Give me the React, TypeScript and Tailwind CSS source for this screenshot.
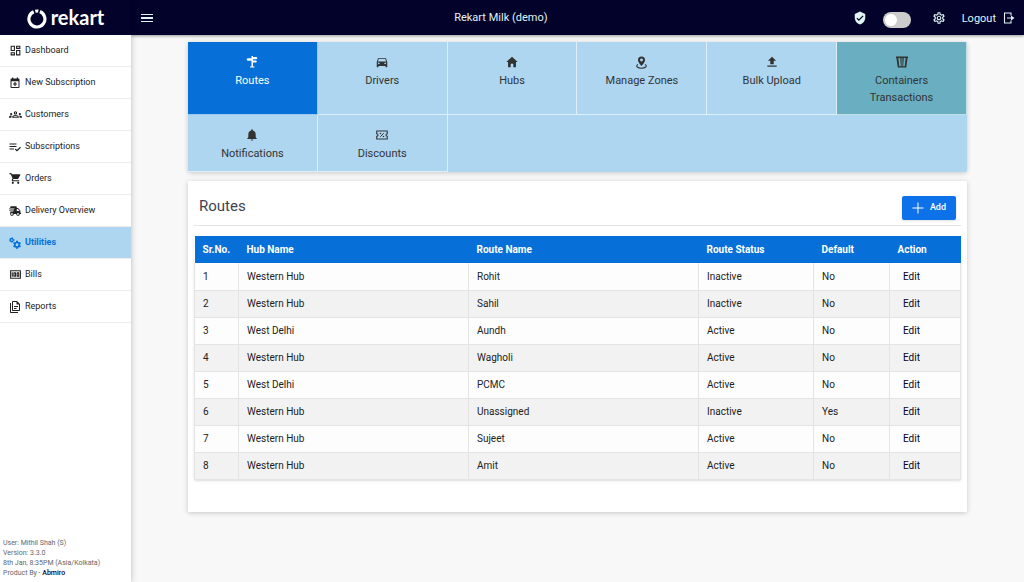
import type { ReactNode } from 'react';
import {
  MdOutlineDashboard, MdOutlineGroups, MdShoppingCart, MdMoney,
  MdVerifiedUser, MdOutlineSettings, MdDirectionsCar,
} from 'react-icons/md';
import { FaShippingFast } from 'react-icons/fa';
import { IoMdHome, IoMdNotifications } from 'react-icons/io';

interface IconProps {
  className?: string;
}

interface NavItem {
  label: string;
  icon: ReactNode;
  active?: boolean;
}

interface Tile {
  label: string;
  icon: ReactNode;
  style: string;
}

interface Route {
  hub: string;
  name: string;
  status: string;
  isDefault: string;
}

function Svg({ children, className = 'size-3' }: IconProps & { children: ReactNode }) {
  return (
    <svg viewBox="0 0 24 24" fill="currentColor" className={className} aria-hidden="true">
      {children}
    </svg>
  );
}

function CalendarIcon() {
  return (
    <Svg>
      <path d="M19 3h-1V1h-2.500v2h-7V1H6v2H5a2 2 0 0 0-2 2v15a2 2 0 0 0 2 2h14a2 2 0 0 0 2-2V5a2 2 0 0 0-2-2zm0 17H5V8.500h14V20z" />
      <path d="M12 10v8M8 14h8" stroke="currentColor" strokeWidth="2.4" />
    </Svg>
  );
}

function ListCheckIcon() {
  return (
    <Svg>
      <path d="M1 6h14M1 11h14M1 16h9M12.500 16l3.500 3.500 7-7" fill="none" stroke="currentColor" strokeWidth="2.4" />
    </Svg>
  );
}

function CogsIcon() {
  return (
    <Svg>
      <circle cx="5.500" cy="6" r="3" fill="none" stroke="currentColor" strokeWidth="2.6" />
      <circle cx="5.500" cy="6" r="4.600" fill="none" stroke="currentColor" strokeWidth="1.600" strokeDasharray="2.400 2.400" />
      <circle cx="16" cy="15.500" r="4.500" fill="none" stroke="currentColor" strokeWidth="3.400" />
      <path d="M16 7.500v3M16 20.500v3M9 11.500l3 1.700M20 17.800l3 1.700M9 19.500l3-1.700M20 13.200l3-1.700" stroke="currentColor" strokeWidth="4" />
    </Svg>
  );
}

function ReportsIcon() {
  return (
    <Svg>
      <path d="M16 0H8C6.900 0 6 .9 6 2v16c0 1.100.9 2 2 2h12c1.100 0 2-.9 2-2V6l-6-6zm4 18H8V2h7v5h5v11zM2 4v18c0 1.100.9 2 2 2h14v-2H4V4zm8 6v2h8v-2h-8zm0 4v2h5v-2h-5z" />
    </Svg>
  );
}

function SignIcon() {
  return (
    <Svg>
      <path d="M11 0h3v2h7l2 2.200-2 2.200h-7V9h6l2 2-2 2h-6v8h3v2H8v-2h3V9.500H3L1 7l2-2.500h8z" />
    </Svg>
  );
}

function ZoneIcon() {
  return (
    <Svg className="size-[13px]">
      <path d="M12 1a6.500 6.500 0 0 0-6.500 6.500C5.500 12.200 12 18.500 12 18.500s6.500-6.300 6.500-11A6.500 6.500 0 0 0 12 1zm0 9.200a2.700 2.700 0 1 1 0-5.400 2.700 2.700 0 0 1 0 5.400z" />
      <path d="M5.500 15.500C0 19 5.500 22.500 12 22.500S24 19 18.500 15.500" fill="none" stroke="currentColor" strokeWidth="2" />
    </Svg>
  );
}

function UploadIcon() {
  return (
    <Svg className="size-3.5">
      <path d="M9 16v-6H5l7-7 7 7h-4v6H9zm-5 4v-2h16v2H4z" />
    </Svg>
  );
}

function BucketIcon() {
  return (
    <Svg>
      <path d="M0 1h24v3h-.8L20.500 23h-17L.8 4H0zM4.700 4l1.900 16.500h3L8.500 4zm6 0v16.500h.8V4zm1.800 0v16.500h.8V4zm3 0l-1.100 16.500h3L19.300 4z" fillRule="evenodd" />
    </Svg>
  );
}

function CouponIcon() {
  return (
    <Svg>
      <path d="M1.500 4h21v5.500a2.500 2.500 0 0 0 0 5V20h-21v-5.500a2.500 2.500 0 0 0 0-5z" fill="none" stroke="currentColor" strokeWidth="2.200" />
      <path d="M15.500 8.500l-7 7" stroke="currentColor" strokeWidth="2" />
      <circle cx="9" cy="9" r="1.600" />
      <circle cx="15" cy="15" r="1.600" />
    </Svg>
  );
}

function LogoutIcon() {
  return (
    <Svg>
      <path d="M16 7V2H3v20h13v-5" fill="none" stroke="currentColor" strokeWidth="2.200" />
      <path d="M8 10.800h8V7l7 5-7 5v-3.800H8z" />
    </Svg>
  );
}

const navItems: NavItem[] = [
  { label: 'Dashboard', icon: <MdOutlineDashboard /> },
  { label: 'New Subscription', icon: <CalendarIcon /> },
  { label: 'Customers', icon: <MdOutlineGroups /> },
  { label: 'Subscriptions', icon: <ListCheckIcon /> },
  { label: 'Orders', icon: <MdShoppingCart /> },
  { label: 'Delivery Overview', icon: <FaShippingFast className="size-3" /> },
  { label: 'Utilities', icon: <CogsIcon />, active: true },
  { label: 'Bills', icon: <MdMoney /> },
  { label: 'Reports', icon: <ReportsIcon /> },
];

const plain = 'bg-[#aed6f1] text-[#333]';

const tiles: Tile[] = [
  { label: 'Routes', icon: <SignIcon />, style: 'bg-[#0670d8] text-white' },
  { label: 'Drivers', icon: <MdDirectionsCar />, style: plain },
  { label: 'Hubs', icon: <IoMdHome />, style: plain },
  { label: 'Manage Zones', icon: <ZoneIcon />, style: plain },
  { label: 'Bulk Upload', icon: <UploadIcon />, style: plain },
  { label: 'Containers Transactions', icon: <BucketIcon />, style: 'bg-[#69afc1] text-[#333]' },
  { label: 'Notifications', icon: <IoMdNotifications />, style: plain },
  { label: 'Discounts', icon: <CouponIcon />, style: plain },
];

const routes: Route[] = [
  { hub: 'Western Hub', name: 'Rohit', status: 'Inactive', isDefault: 'No' },
  { hub: 'Western Hub', name: 'Sahil', status: 'Inactive', isDefault: 'No' },
  { hub: 'West Delhi', name: 'Aundh', status: 'Active', isDefault: 'No' },
  { hub: 'Western Hub', name: 'Wagholi', status: 'Active', isDefault: 'No' },
  { hub: 'West Delhi', name: 'PCMC', status: 'Active', isDefault: 'No' },
  { hub: 'Western Hub', name: 'Unassigned', status: 'Inactive', isDefault: 'Yes' },
  { hub: 'Western Hub', name: 'Sujeet', status: 'Active', isDefault: 'No' },
  { hub: 'Western Hub', name: 'Amit', status: 'Active', isDefault: 'No' },
];

function Sidebar() {
  return (
    <aside className="z-20 flex w-[131px] shrink-0 flex-col bg-white shadow-[0_0_6px_rgba(0,0,0,0.25)]">
      <div className="flex h-[35px] items-center justify-center gap-1 bg-[#02022a] pb-0.5 text-white">
        <svg viewBox="0 0 20 20" className="mt-1 size-5" fill="none" stroke="currentColor" strokeWidth="3.2" aria-hidden="true">
          <path d="M12.900 2.600A8 8 0 1 1 6.700 2.700" />
          <path d="M8.300 2.200A8 8 0 0 1 11.300 2.100" />
        </svg>
        <span className="font-['Lato',sans-serif] text-[20px] leading-5 font-bold">rekart</span>
      </div>
      <nav>
        {navItems.map((item) => (
          <a
            key={item.label}
            href="#"
            className={`flex h-8 items-center border-b border-[#eee] pl-[9px] text-[9px] ${
              item.active ? 'bg-[#aed6f1] font-bold text-[#0670d8]' : 'text-[#222]'
            }`}
          >
            <span className="flex w-4 text-[13px]">{item.icon}</span>
            {item.label}
          </a>
        ))}
      </nav>
      <footer className="mt-auto px-[3px] pb-1 text-[7px] leading-[10px] text-[#666]">
        <p>User: Mithil Shah (S)</p>
        <p>Version: 3.3.0</p>
        <p>8th Jan, 8:35PM (Asia/Kolkata)</p>
        <p>
          Product By - <a href="#" className="font-medium text-[#02022a]">Abmiro</a>
        </p>
      </footer>
    </aside>
  );
}

function Header() {
  return (
    <header className="flex h-[35px] shrink-0 items-center bg-[#02022a] text-[#e0f4f4] shadow-[0_1px_3px_rgba(0,0,0,0.4)]">
      <button type="button" aria-label="Toggle menu" className="ml-2.5 flex w-3 flex-col gap-0.5">
        <span className="h-px bg-current" />
        <span className="h-0.5 bg-current" />
        <span className="h-px bg-current" />
      </button>
      <h1 className="flex-1 pt-0.5 pr-1 text-center text-[11px]">Rekart Milk (demo)</h1>
      <MdVerifiedUser className="size-3.5" />
      <label className="relative mt-1 ml-4 flex h-4 w-7 cursor-pointer items-center rounded-full bg-[#ccc] px-0.5">
        <input type="checkbox" aria-label="Toggle mode" className="peer absolute inset-0 opacity-0" />
        <span className="size-3 rounded-full bg-white peer-checked:translate-x-3" />
      </label>
      <button type="button" aria-label="Settings" className="ml-[21px]">
        <MdOutlineSettings className="size-3.5" />
      </button>
      <button type="button" className="mr-[9px] ml-4 flex items-center gap-[7px] text-[11px]">
        <span className="pt-1">Logout</span>
        <LogoutIcon />
      </button>
    </header>
  );
}

export default function App() {
  return (
    <div className="flex min-h-screen bg-[#f8f8f8] font-['Roboto',sans-serif] text-[#222]">
      <Sidebar />
      <div className="flex min-w-0 flex-1 flex-col">
        <Header />
        <main className="px-[57px] pt-[7px]">
          <nav className="grid grid-cols-6 rounded-xs bg-[#aed6f1] shadow-[0_1px_5px_rgba(0,0,0,0.2)]">
            {tiles.map((tile) => (
              <a
                key={tile.label}
                href="#"
                className={`flex min-h-[57px] flex-col items-center border-r border-b border-white/60 px-4 pt-3 pb-2 text-center text-[11px] leading-[17px] ${tile.style}`}
              >
                <span className="mb-0.5 flex h-4 items-center text-[14px]">{tile.icon}</span>
                {tile.label}
              </a>
            ))}
          </nav>
          <section className="mt-[9px] bg-white px-1.5 pb-8 shadow-[0_1px_5px_rgba(0,0,0,0.2)]">
            <div className="flex h-[45px] items-start justify-between border-b border-[#e4e4e4] px-[5px]">
              <h2 className="pt-[13px] text-[15px] leading-6 text-[#3c4450]">Routes</h2>
              <button type="button" className="mt-[15px] flex h-6 items-center gap-1.5 rounded-xs bg-[#0d72ea] px-2.5 text-[9px] font-medium text-white shadow">
                <Svg>
                  <path d="M12 1v22M1 12h22" stroke="currentColor" strokeWidth="2" />
                </Svg>
                Add
              </button>
            </div>
            <table className="mt-2.5 w-full table-fixed border-collapse text-left text-[10px] shadow">
              <thead className="bg-[#0670d8] text-white">
                <tr className="h-[27px]">
                  <th className="w-[44px] px-2">Sr.No.</th>
                  <th className="px-2">Hub Name</th>
                  <th className="px-2">Route Name</th>
                  <th className="w-[115px] px-2">Route Status</th>
                  <th className="w-[76px] px-2">Default</th>
                  <th className="w-[71px] px-2">Action</th>
                </tr>
              </thead>
              <tbody>
                {routes.map((route, i) => (
                  <tr key={route.name} className="h-[27px] border-b border-[#e4e4e4] bg-[#fdfdfd] even:bg-[#f2f2f2]">
                    <td className="border-x border-[#e4e4e4] px-2">{i + 1}</td>
                    <td className="border-r border-[#e4e4e4] px-2">{route.hub}</td>
                    <td className="border-r border-[#e4e4e4] px-2">{route.name}</td>
                    <td className="border-r border-[#e4e4e4] px-2">{route.status}</td>
                    <td className="border-r border-[#e4e4e4] px-2">{route.isDefault}</td>
                    <td className="border-r border-[#e4e4e4] pl-[13px]">
                      <a href="#" className="text-[#02022a]">Edit</a>
                    </td>
                  </tr>
                ))}
              </tbody>
            </table>
          </section>
        </main>
      </div>
    </div>
  );
}
